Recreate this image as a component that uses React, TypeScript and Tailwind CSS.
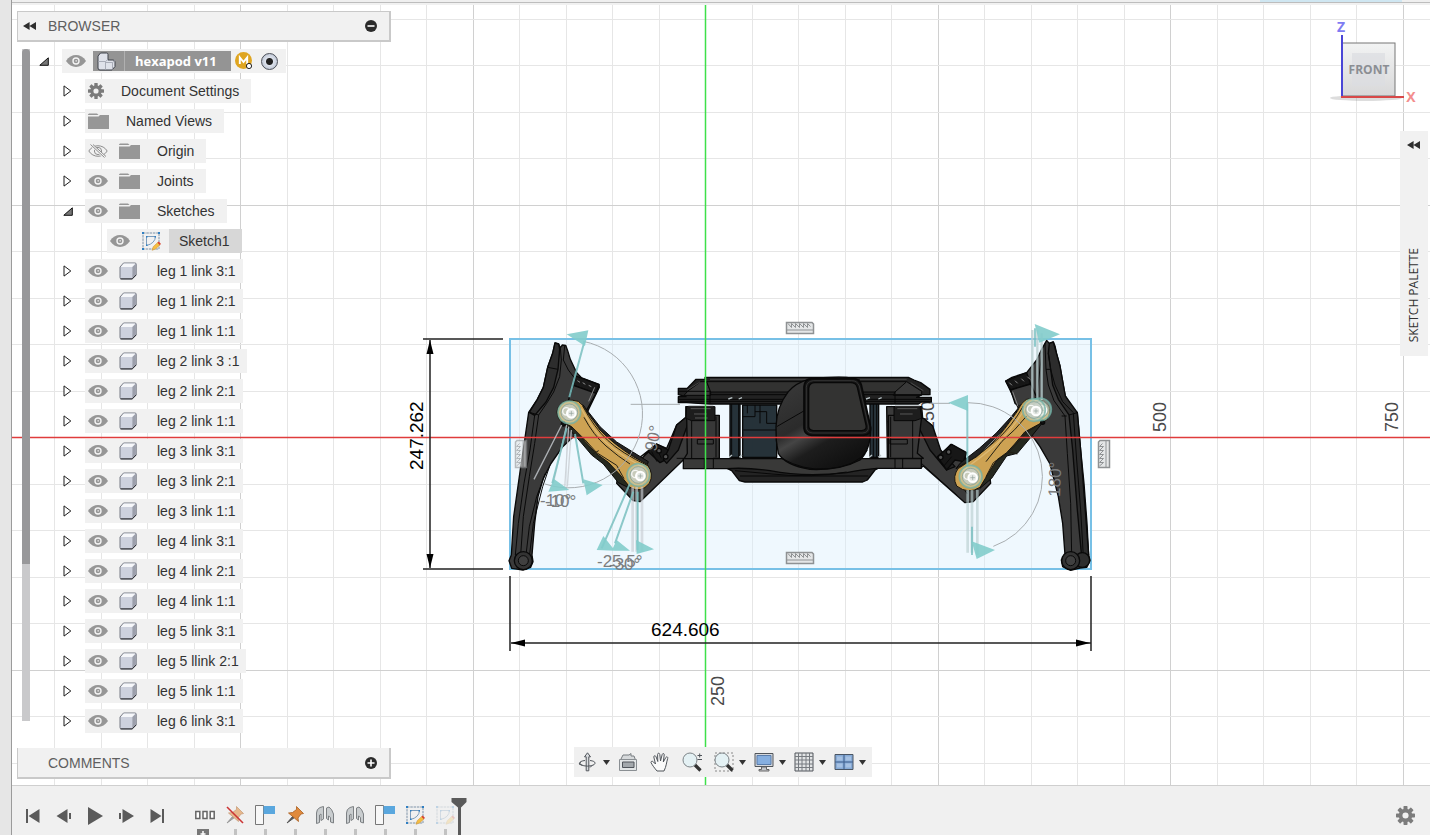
import React from "react";

const SANS = "font-['Liberation_Sans',Arial,sans-serif]";
const GRID = 46.5;
const AXIS = { x: 705, y: 437 };

/* ---------- small icons ---------- */

function Rewind() {
  return (
    <svg width="13" height="8" viewBox="0 0 13 8" fill="#2e2e2e" aria-hidden="true">
      <path d="M6.6 0v8L0 4zM13 0v8L6.4 4z" />
    </svg>
  );
}

function Eye({ off = false }: { off?: boolean }) {
  if (off) {
    return (
      <svg width="20" height="14" viewBox="0 0 20 14" fill="none" stroke="#8c8c8c" aria-hidden="true">
        <path d="M.8 7C5 0 15 0 19.2 7C15 14 5 14 .8 7z" />
        <circle cx="10" cy="7" r="3.6" />
        <path d="M3.5 1l13 12" stroke="#f1f1f1" strokeWidth="3" />
        <path d="M2.5 .5l14 13M5 .5l13 12" />
      </svg>
    );
  }
  return (
    <svg width="20" height="14" viewBox="0 0 20 14" aria-hidden="true">
      <path d="M0 7C5-.9 15-.9 20 7C15 14.900 5 14.900 0 7z" fill="#969696" />
      <circle cx="10" cy="7" r="3.7" fill="#f4f4f4" />
      <circle cx="10" cy="7" r="2.300" fill="#969696" />
      <circle cx="10.200" cy="6.800" r=".9" fill="#ddd" />
    </svg>
  );
}

function Folder() {
  return (
    <svg width="21" height="17" viewBox="0 0 21 17" fill="#979797" aria-hidden="true">
      <path d="M0 1.500L1 .5h8l1.500 1.500H0z" />
      <path d="M0 3.500h10.500l1.500-1.500h9V16H0z" />
    </svg>
  );
}

function Gear({ size, color, hole }: { size: number; color: string; hole: string }) {
  return (
    <svg width={size} height={size} viewBox="-9 -9 18 18" fill={color} aria-hidden="true">
      {[0, 45, 90, 135].map((a) => (
        <rect key={a} x="-1.900" y="-9" width="3.800" height="18" rx=".6" transform={`rotate(${a})`} />
      ))}
      <circle r="6.400" />
      <circle r="2.900" fill={hole} />
    </svg>
  );
}

function Cube() {
  return (
    <svg width="18" height="18" viewBox="0 0 18 18" aria-hidden="true">
      <path d="M1 5L4.500 1H16q1.200 0 1.200 1.200V13l-4 4H2.500Q1 17 1 15.500z" fill="#cdd1dd" stroke="#777a84" />
      <path d="M1.800 5L4.800 1.500H16.400L13.400 5z" fill="#f6f7fa" />
      <path d="M13.400 5L16.800 1.800v11L13.400 16.400z" fill="#9c9fab" />
      <path d="M1.500 16.900h11.700l3.900-3.900" fill="none" stroke="#2b2c31" />
    </svg>
  );
}

function Component() {
  return (
    <svg width="19" height="19" viewBox="0 0 19 19" fill="#dfe2ea" stroke="#3f424b" aria-hidden="true">
      <path d="M1 4L3.500 1H9.500Q11 1 11 2.500V8h5q2 0 2 2v4.500L15 18H3Q1 18 1 16z" />
      <path d="M1.500 9.500H8.500V17.500M8.500 9.500L11 7.500" fill="none" stroke="#a9adb8" />
      <path d="M8.500 10.500H15.500L18 8.500M15.500 10.500V17.500" fill="none" stroke="#a9adb8" />
    </svg>
  );
}

function SketchIcon({ faded = false }: { faded?: boolean }) {
  return (
    <svg width="20" height="20" viewBox="0 0 20 20" fill="none" opacity={faded ? 0.25 : 1} aria-hidden="true">
      <path d="M2 2h16v16H2z" stroke="#7e93a8" strokeDasharray="2.500 .8" />
      <path d="M5.500 5.500h9q-.5 7-9 9z" stroke="#7b9cbc" />
      <path d="M1 1h2v2H1zM17 1h2v2h-2zM1 17h2v2H1zM5 5h1.500v1.500H5zM13.500 5H15v1.500h-1.500zM5 13.500h1.500V15H5z" fill="#2f7fc2" />
      <path d="M11 19.300l1.200-3.600 4.400-4.100 2.300 2.300-4.400 4.100z" fill="#f5bd42" stroke="#c58c30" strokeWidth=".5" />
      <path d="M16.500 11.800l1.300-1.200 2.200 2.300-1.200 1.100z" fill="#d9402e" />
    </svg>
  );
}

function Expander({ open = false }: { open?: boolean }) {
  return open ? (
    <svg width="10" height="9" viewBox="0 0 10 9" aria-hidden="true">
      <path d="M.8 8.300H9.300V.8z" fill="#777" stroke="#111" />
    </svg>
  ) : (
    <svg width="9" height="12" viewBox="0 0 9 12" aria-hidden="true">
      <path d="M1 .9V11.100L7.800 6z" fill="#fff" stroke="#1d1d1d" />
    </svg>
  );
}

function Caret() {
  return (
    <svg width="7" height="5" viewBox="0 0 7 5" fill="#333" aria-hidden="true">
      <path d="M0 0h7L3.500 5z" />
    </svg>
  );
}

/* ---------- browser tree ---------- */

type Kind = "gear" | "folder" | "cube";
interface Node {
  label: string;
  kind: Kind;
  eye?: "on" | "off";
  open?: boolean;
}

const TOP: Node[] = [
  { label: "Document Settings", kind: "gear" },
  { label: "Named Views", kind: "folder" },
  { label: "Origin", kind: "folder", eye: "off" },
  { label: "Joints", kind: "folder", eye: "on" },
  { label: "Sketches", kind: "folder", eye: "on", open: true },
];

const LEGS = [
  "leg 1 link 3:1", "leg 1 link 2:1", "leg 1 link 1:1",
  "leg 2 link 3 :1", "leg 2 link 2:1", "leg 2 link 1:1",
  "leg 3 link 3:1", "leg 3 link 2:1", "leg 3 link 1:1",
  "leg 4 link 3:1", "leg 4 link 2:1", "leg 4 link 1:1",
  "leg 5 link 3:1", "leg 5 llink 2:1", "leg 5 link 1:1",
  "leg 6 link 3:1",
];

function TreeRow({ node }: { node: Node }) {
  const cube = node.kind === "cube";
  return (
    <li className="flex h-[30px] items-center pl-[33px]">
      <button className="flex w-[22px] shrink-0 items-center" aria-label={`Expand ${node.label}`}>
        <Expander open={node.open} />
      </button>
      <div className={`flex h-6 items-center bg-[#f1f1f1] pl-[3px] ${cube ? "pr-[7px]" : "pr-3"}`}>
        {node.eye && (
          <button className="flex w-[31px] items-center" aria-label={`Visibility of ${node.label}`}>
            <Eye off={node.eye === "off"} />
          </button>
        )}
        <span className={node.eye ? "w-[38px]" : node.kind === "gear" ? "w-[33px]" : "w-[38px]"}>
          {node.kind === "gear" && <Gear size={16} color="#7b7b7b" hole="#f1f1f1" />}
          {node.kind === "folder" && <Folder />}
          {cube && <Cube />}
        </span>
        <button className="whitespace-nowrap">{node.label}</button>
      </div>
    </li>
  );
}

function Browser() {
  return (
    <div className="flex">
      <div className="ml-[5px] mt-[7px] h-[672px] w-2 bg-[#c9c9cb]">
        <div className="h-[515px] rounded-t-sm bg-[#98989a]" />
      </div>
      <ul className="mt-1 text-[14px] leading-[18px] text-[#333]">
        <li className="flex h-[30px] items-center pl-[9px]">
          <button className="flex w-[23px] items-center" aria-label="Collapse hexapod v11">
            <Expander open />
          </button>
          <div className="flex h-6 items-center bg-[#f1f1f1] pl-1 pr-2">
            <button className="flex w-[27px] items-center" aria-label="Visibility of hexapod v11">
              <Eye />
            </button>
            <div className="flex h-5 items-center bg-[#949494]">
              <span className="flex h-5 w-8 items-center border-r border-[#b0b0b0] pl-1">
                <Component />
              </span>
              <button className="pl-2.5 pr-3.5 font-['Open_Sans',sans-serif] text-[13px] font-bold text-white">
                hexapod v11
              </button>
            </div>
            <svg className="ml-1 mr-2" width="18" height="18" viewBox="0 0 18 18" aria-hidden="true">
              <circle cx="8.500" cy="8.500" r="8.500" fill="#dfa520" />
              <path d="M4.800 12V5.500L8.500 10l3.700-4.500V12" fill="none" stroke="#fff" strokeWidth="1.900" />
              <circle cx="14" cy="14" r="2.600" fill="#fff" stroke="#222" />
            </svg>
            <label className="relative flex">
              <input
                type="radio"
                defaultChecked
                aria-label="Activate component"
                className="size-[17px] appearance-none rounded-full border border-[#4b4f58] bg-[radial-gradient(circle,#222_0_3px,#dde2ec_4px,#b8c0cf_9px)]"
              />
            </label>
          </div>
        </li>
        {TOP.map((n) => (
          <TreeRow key={n.label} node={n} />
        ))}
        <li className="flex h-[30px] items-center pl-[77px]">
          <div className="flex h-6 items-center bg-[#f1f1f1] pl-[3px]">
            <button className="flex w-[31px] items-center" aria-label="Visibility of Sketch1">
              <Eye />
            </button>
            <span className="w-7">
              <SketchIcon />
            </span>
            <button className="h-6 bg-[#d7d7d7] pl-2.5 pr-3">Sketch1</button>
          </div>
        </li>
        {LEGS.map((l) => (
          <TreeRow key={l} node={{ label: l, kind: "cube", eye: "on" }} />
        ))}
      </ul>
    </div>
  );
}

/* ---------- model ---------- */

function Rack({ x, y, turn = 0 }: { x: number; y: number; turn?: number }) {
  return (
    <g transform={`translate(${x} ${y}) rotate(${turn})`} fill="#e4e6e7" stroke="#8f9294">
      <path d="M-13.500 -5.500H12L13.500 -4V5.500H-13.500z" strokeWidth="1.500" />
      <path d="M-12 -4.500l3.500 4v-4l4 4v-4l4 4v-4l4 4v-4l4 4v-4l3 3M-13 2h26" fill="none" />
    </g>
  );
}

function Joint({ x, y }: { x: number; y: number }) {
  return (
    <g transform={`translate(${x} ${y})`}>
      <circle r="34" fill="#c9dccb" fillOpacity=".5" stroke="#6fb0a6" strokeWidth="5" strokeOpacity=".75" />
      <circle r="25" fill="#c5cdc4" fillOpacity=".8" stroke="#7a9a92" strokeWidth="2" />
      <circle cx="-9" cy="-3" r="11" fill="none" stroke="#f4f6f4" strokeWidth="4" />
      <circle cx="6" cy="3" r="13" fill="#e6e9e5" stroke="#fff" strokeWidth="6" />
      <path d="M6 -4V10M-1 3H13" stroke="#8f9f98" strokeWidth="2" />
    </g>
  );
}

function LeftLeg() {
  return (
    <g transform="translate(400 310) scale(.33333)" stroke="#090909" strokeWidth="4" strokeLinejoin="round">
      <path fill="#3a3a3a" d="M465 99L476 102L481 113L487 105L497 106L503 122L511 148L530 188L545 204L597 223L598 232L566 298L540 360L520 380L488 410L452 462L430 505L414 560L404 640L396 735L399 755L392 772L370 780L335 775L327 752L334 735L341 620L358 500L374 390L386 307L412 268L430 232L443 172L458 130z" />
      <path fill="#2d2d2d" d="M465 99L476 102L479 118L474 178L461 232L438 276L404 316L388 307L412 268L430 232L443 172L458 130z" />
      <path fill="none" strokeWidth="3" d="M481 113L484 150L479 200L461 246L440 280L416 315L404 400L388 500L370 620L362 735M404 316L390 420L372 520L355 640L346 735M494 108L490 150L505 180L528 210M443 172L474 178M388 307L416 315M436 490L410 560L388 650L378 735M450 465L428 530L400 640L388 740M345 735L392 745" />
      <path fill="#191919" d="M527 198L597 224L588 250L520 226z" />
      <path fill="#3c3c3c" d="M520 226L588 250L560 300L505 272z" />
      <path stroke="#8a8a8a" strokeWidth="3" fill="none" d="M532 212l8 5M548 218l8 5M566 226l8 4M584 232l-18 42" />
      <circle cx="370" cy="752" r="27" fill="#333" />
      <circle cx="370" cy="752" r="15" fill="#404040" strokeWidth="3" />
      {/* lower bracket and servo */}
      <path fill="#3b3b3b" d="M720 575L700 572L650 520L652 506L640 480L720 450L770 402L800 415L830 345L858 322L858 290L905 290L905 472L852 472L852 448z" />
      <path fill="#191919" d="M722 440L770 402L805 420L800 448L780 458L745 425z" />
      <path fill="#262626" d="M858 290L905 290L905 325L868 330L835 420L800 460L790 448L805 420L830 345L858 322z" />
      <path fill="none" strokeWidth="3" d="M876 325V472M770 415l14 30M755 425l16 30M830 445H870" />
      <circle cx="777" cy="422" r="7" fill="#555" />
      <circle cx="797" cy="440" r="7" fill="#555" />
      {/* coloured link */}
      <path fill="#242424" strokeWidth="3" d="M548 284L600 350L650 396L705 430L745 455L740 470L680 430L600 362z" />
      <path fill="#25281f" strokeWidth="3" d="M490 340L530 382L575 435L610 462L655 518L690 535L670 500L620 440L540 362z" />
      <path fill="#cda253" stroke="#17150f" strokeWidth="3" d="M480 284Q500 264 535 274Q548 282 562 308L600 360Q640 402 700 440L742 464Q763 492 748 520Q722 552 690 532L658 492L625 457L588 430L556 395L515 350L480 332Q462 305 480 284z" />
      <path fill="none" stroke="#201d13" strokeWidth="3" d="M548 288Q582 352 622 390T745 468M552 322Q580 375 618 408T690 462M520 355Q556 388 590 428L650 466L672 506M575 434L596 422" />
      <path fill="none" stroke="#dcb873" strokeWidth="4" d="M544 296Q577 358 614 394T730 472" />
      <circle cx="490" cy="342" r="6" fill="#111" />
    </g>
  );
}

function RightLeg() {
  return (
    <g transform="translate(880 310) scale(.33333)" stroke="#090909" strokeWidth="4" strokeLinejoin="round">
      <path fill="#3a3a3a" d="M500 91L508 100L520 96L525 108L530 132L540 168L550 225L556 258L580 300L592 308L602 420L612 520L621 640L626 735L630 752L620 772L600 774L572 781L548 770L544 750L555 735L548 640L535 560L510 462L480 410L452 370L440 330L415 295L400 260L377 213L396 202L440 188L470 150L485 118z" />
      <path fill="#2c2c2c" d="M508 100L520 96L530 132L540 168L550 225L556 258L592 308L602 420L626 735L605 740L592 600L578 420L567 315L535 268L518 225L512 178L505 130z" />
      <path fill="none" strokeWidth="3" d="M495 100L498 178L505 225L522 272L555 318L562 430L572 580L575 735M512 178L525 225L548 275L580 308M580 310L590 450L602 600L610 740M505 130L512 178M498 178L512 178M545 318L560 318M555 735L592 735M486 125L470 260M567 315L592 308" />
      <path fill="#171717" d="M377 213L440 188L452 222L392 240z" />
      <path fill="#3b3b3b" d="M392 240L452 222L470 262L420 290L405 280z" />
      <path stroke="#8a8a8a" strokeWidth="3" fill="none" d="M388 218l8 8M405 212l8 8M424 206l8 8M442 200l8 8M398 245l16 44" />
      <circle cx="607" cy="750" r="22" fill="#2e2e2e" />
      <circle cx="572" cy="752" r="27" fill="#333" />
      <circle cx="572" cy="752" r="15" fill="#404040" strokeWidth="3" />
      <path fill="#3b3b3b" d="M20 290L125 290L128 325L155 345L178 440L212 403L250 425L262 460L330 505L332 520L280 575L255 578L130 468L125 472L0 472L0 445L22 445z" />
      <path fill="#262626" d="M103 325L130 325L158 348L182 420L225 470L200 480L150 420z" />
      <path fill="#171717" d="M172 440L215 403L260 428L250 455L225 450L200 480z" />
      <path fill="none" strokeWidth="3" d="M102 335V440L230 555M190 470L215 440M22 335H102M240 520L262 552" />
      <circle cx="182" cy="442" r="7" fill="#555" />
      <circle cx="206" cy="426" r="7" fill="#555" />
      <path fill="#242424" strokeWidth="3" d="M425 282L392 322L348 370L298 415L240 460L228 476L290 440L375 355z" />
      <path fill="#25281f" strokeWidth="3" d="M490 335L450 385L412 430L380 438L335 505L300 535L320 490L360 440L430 368z" />
      <path fill="#cda253" stroke="#17150f" strokeWidth="3" d="M505 285Q480 258 440 268Q425 276 412 304L375 355Q345 395 290 440L237 472Q215 500 230 528Q265 555 300 532L325 490L350 450L380 428L404 402L434 366L500 330Q516 305 505 285z" />
      <path fill="none" stroke="#201d13" strokeWidth="3" d="M430 288Q395 350 350 390T236 475M440 318Q405 362 366 394L318 455M486 338L440 368L385 428L340 458L318 500M385 425L412 432" />
      <path fill="none" stroke="#dcb873" strokeWidth="4" d="M436 294Q400 354 356 396T240 486" />
      <circle cx="488" cy="337" r="6" fill="#111" />
    </g>
  );
}

function Body() {
  return (
    <g transform="translate(660 350) scale(.33333)" stroke="#080808" strokeWidth="4" strokeLinejoin="round">
      <path fill="#1d2a31" fillOpacity=".96" d="M248 165H350V322H248zM210 160H240V322H210zM630 160H656V322H630z" />
      <path fill="none" strokeWidth="3" d="M248 200H285V165M285 185H320V220H350M250 240H350M262 165V190M300 165V220M215 160V322M236 160V322M640 160V322M650 160V322" />
      <path fill="#222" d="M55 115L82 115L108 88H135V82H745L762 90L782 98L810 118V134H785L770 142H814V156H785L775 162H150L80 158H55V140H78L55 134z" />
      <path fill="#393939" strokeWidth="3" d="M85 122L122 95H140L152 126V136H72z" />
      <path fill="#323231" strokeWidth="3" d="M140 95H740L710 126H152z" />
      <path fill="#393939" strokeWidth="3" d="M705 126L740 95L785 124V136H700z" />
      <path fill="none" stroke="#5c5c5c" strokeWidth="2" d="M82 120L120 96M752 98L790 122M150 88H440M600 88H740" />
      <path fill="none" strokeWidth="3" d="M55 124H150M55 148H812M150 126V160M705 126V160M60 154H808M152 134H808" />
      <path stroke="#b9c4c7" strokeWidth="4" fill="none" d="M205 147l12-4M236 147l10-4M618 147l12-4M655 147l10-4M208 322l8-7M238 322l8-7M628 322l8-7M655 322l8-7" />
      {/* servo towers */}
      <path fill="#383838" d="M80 200L85 170H160L162 196H178V325H160V330H70L82 310z" />
      <path fill="#1d1d1d" strokeWidth="3" d="M80 170H165V212H95L78 205z" />
      <path fill="#383838" d="M785 200L780 170H705V196H685V325H790L772 310z" />
      <path fill="#1d1d1d" strokeWidth="3" d="M780 170H702V212H765L785 205z" />
      <path fill="none" strokeWidth="3" d="M95 212V325M168 200V322M112 268H160V282H112zM692 200V322M758 212V325M690 268H742V282H690z" />
      <path fill="none" stroke="#777" strokeWidth="2" d="M85 168h75M92 176h60M102 192h38M705 168h75M712 176h60M720 192h38M105 204h38" />
      {/* underside plate */}
      <path fill="#242424" d="M195 352L215 362L238 392L255 396H608L622 390L645 360L660 352z" />
      <path fill="#393938" d="M70 326H784V355H650Q610 358 560 368Q430 382 330 362Q260 352 200 356H70z" />
      <path fill="none" strokeWidth="3" d="M133 326V355M160 326V355M705 326V355M728 326V355M225 362L335 372M240 378H625M335 372Q460 385 560 366" />
      {/* head */}
      <path fill="url(#head)" d="M348 230Q350 170 385 125Q405 100 445 88Q500 80 560 82Q590 85 598 95L632 235Q632 300 600 330Q540 362 450 358Q375 345 355 310Q346 270 348 230z" />
      <path fill="none" strokeWidth="3" d="M350 230L440 178M365 325Q430 362 500 357Q590 350 622 300" />
      <path fill="#151515" strokeWidth="5" d="M455 86H580Q598 86 604 105L632 232Q634 254 610 256H455Q434 254 432 235V110Q434 88 455 86z" />
      <path fill="#333332" strokeWidth="4" d="M465 98H572Q588 98 592 112L618 225Q622 240 605 242H460Q446 240 446 228V115Q448 98 465 98z" />
      <path fill="none" stroke="#444" strokeWidth="2" d="M460 92H575Q592 92 598 108L625 228Q628 248 608 249H458Q440 248 439 232V112Q440 94 460 92z" />
    </g>
  );
}

function LeftGuides() {
  return (
    <g transform="translate(400 310) scale(.33333)">
      <path d="M550 94A222 222 0 1 1 435 522M692 283H840" fill="none" stroke="#a8adb0" strokeWidth="3" />
      <g stroke="#c8cdd2" strokeWidth="4" strokeOpacity=".8">
        <path d="M485 345L402 508M500 345L460 520M506 350L494 535M514 360L502 530" />
        <path d="M698 530V725M726 530V725M710 530V725" strokeWidth="8" strokeOpacity=".65" />
      </g>
      <path d="M553 95L508 262M500 355L457 520M525 372L550 520M690 520L605 715M700 545L645 700M713 545V720" stroke="#79bfc0" strokeOpacity=".85" strokeWidth="6" fill="none" />
      <path d="M500 73L565 61L555 108zM445 545L462 507L508 540zM550 508L608 525L560 556zM590 720L610 678L645 722zM635 722L650 690L690 722zM708 690L762 718L710 732z" fill="#82cccb" fillOpacity=".9" />
      <Joint x={508} y={307} />
      <Joint x={715} y={495} />
    </g>
  );
}

function RightGuides() {
  return (
    <g transform="translate(880 310) scale(.33333)">
      <path d="M262 278A222 222 0 0 1 340 709M150 280H210" fill="none" stroke="#a8adb0" strokeWidth="3" />
      <g stroke="#b9ced0" strokeWidth="7" strokeOpacity=".8">
        <path d="M457 60V270M472 60V270M485 70V270" />
        <path d="M263 540V728M276 540V728M292 540V735" strokeWidth="8" strokeOpacity=".65" />
      </g>
      <path d="M262 280V470M465 55V110M276 650V735" stroke="#79bfc0" strokeOpacity=".8" strokeWidth="6" />
      <path d="M205 278L264 255V303zM464 42L540 73L478 98zM275 694L345 720L290 747z" fill="#82cccb" fillOpacity=".9" />
      <Joint x={480} y={298} />
      <Joint x={462} y={300} />
      <Joint x={272} y={500} />
    </g>
  );
}

const steps = (from: number, to: number) => Array.from({ length: to - from + 1 }, (_, i) => from + i);

function Viewport() {
  return (
    <svg className={`absolute inset-0 h-full w-full ${SANS}`} role="img" aria-label="hexapod model, front view">
      <defs>
        <linearGradient id="head" x1="0" y1="0" x2=".6" y2="1">
          <stop offset="0" stopColor="#3c3c3c" />
          <stop offset=".5" stopColor="#2b2b2b" />
          <stop offset=".6" stopColor="#454545" />
          <stop offset=".75" stopColor="#1d1d1d" />
          <stop offset="1" stopColor="#111" />
        </linearGradient>
      </defs>
      <g transform="translate(-12 -5)">
        <g shapeRendering="crispEdges">
          {steps(-15, 60).map((k) => (
            <rect key={`v${k}`} x={Math.round(AXIS.x + k * GRID)} y="-20" width="1" height="3000" fill={k % 5 ? "#e6e6e6" : "#d0d0d0"} />
          ))}
          {steps(-10, 50).map((k) => (
            <rect key={`h${k}`} x="0" y={Math.round(AXIS.y + k * GRID)} width="4000" height="1" fill={k % 5 ? "#e6e6e6" : "#d0d0d0"} />
          ))}
        </g>
        <rect x="510" y="339" width="581" height="230" fill="#d9effc" fillOpacity=".42" />
        <g fill="#4a4a4a" fontSize="18">
          <text transform="translate(934 431) rotate(-90)">250</text>
          <text transform="translate(724 706) rotate(-90)">250</text>
          <text transform="translate(1166 432) rotate(-90)">500</text>
          <text transform="translate(1398 432) rotate(-90)">750</text>
        </g>
        <rect x="510" y="339" width="581" height="230" fill="none" stroke="#77c0e6" strokeWidth="2" />
        <LeftLeg />
        <RightLeg />
        <Body />
        <g fill="#3ee04a">
          <rect x="704" y="0" width="3" height="3000" opacity=".25" />
          <rect x="705" y="0" width="1" height="3000" />
        </g>
        <g fill="#e03c3c">
          <rect x="0" y="436" width="4000" height="3" opacity=".25" />
          <rect x="0" y="437" width="4000" height="1" />
        </g>
        <LeftGuides />
        <RightGuides />
        <Rack x={800} y={328} />
        <Rack x={800} y={558} />
        <Rack x={1104} y={454} turn={-90} />
        <g opacity=".6">
          <Rack x={521} y={454} turn={-90} />
        </g>
        <g fill="#7b7d7f" fontSize="17">
          <text x="540" y="506">-10°</text>
          <text x="545" y="507">-10°</text>
          <text x="597" y="567">-25.5°</text>
          <text x="609" y="570">-30°</text>
          <text transform="translate(656 452) rotate(-78)">90°</text>
          <text transform="translate(1060 497) rotate(-88)">180°</text>
        </g>
        {/* dimensions */}
        <g stroke="#222" strokeWidth="1.500">
          <path d="M423 339h80M423 569h80M430 340v228M510 576v75M1091 576v75M511 643h580" />
        </g>
        <path d="M430 340l-3.500 14h7zM430 568l-3.500-14h7zM511 643l14-3.500v7zM1090 643l-14-3.500v7z" fill="#000" />
        <g fill="#000" fontSize="19">
          <text x="651" y="636">624.606</text>
          <text transform="translate(423 470) rotate(-90)">247.262</text>
        </g>
      </g>
    </svg>
  );
}

function ViewCube() {
  return (
    <svg width="92" height="90" viewBox="1328 17 92 90" className="font-['Open_Sans',sans-serif]" role="img" aria-label="View cube">
      <defs>
        <linearGradient id="face" x1="0" y1="0" x2="0" y2="1">
          <stop offset="0" stopColor="#f2f3f3" />
          <stop offset="1" stopColor="#d8d8d9" />
        </linearGradient>
      </defs>
      <ellipse cx="1366" cy="98" rx="36" ry="3" fill="#777" opacity=".25" />
      <rect x="1342" y="43" width="53" height="53" fill="url(#face)" stroke="#777" />
      <rect x="1352" y="53" width="33" height="33" fill="#dcdde1" opacity=".7" />
      <text x="1369" y="74" textAnchor="middle" fontSize="12" fontWeight="700" fill="#8b8e93">FRONT</text>
      <path d="M1342 35v62" stroke="#4a46d6" strokeWidth="2" />
      <path d="M1341 97h63" stroke="#d84848" strokeWidth="2" />
      <text x="1341" y="32" textAnchor="middle" fontSize="14" fontWeight="700" fill="#7f7cf2">Z</text>
      <text x="1411" y="102" textAnchor="middle" fontSize="14" fontWeight="700" fill="#f38e8e">X</text>
    </svg>
  );
}

/* ---------- navigation bar ---------- */

function NavButton({ label, caret, children }: { label: string; caret?: boolean; children: React.ReactNode }) {
  return (
    <button aria-label={label} className="flex items-center gap-[5px]">
      <svg width="20" height="20" viewBox="0 0 20 20" fill="none" stroke="#50555b" aria-hidden="true">
        {children}
      </svg>
      {caret && <Caret />}
    </button>
  );
}

function Lens() {
  return (
    <>
      <path d="M12.500 12.500l6 6" stroke="#333" strokeWidth="3.200" />
      <circle cx="8" cy="8" r="7" fill="#e4f1f4" stroke="#7d8488" />
    </>
  );
}

function NavBar() {
  return (
    <nav className="flex h-[30px] items-center bg-[#f0f0f0] pl-1 pr-1.5">
      <div className="mr-2">
        <NavButton label="Orbit" caret>
          <path d="M9.500 .8l3 4h-1.700v14H8.200v-14H6.500z" fill="#d9dcdf" />
          <path d="M7 8.500C2 9 .5 11 3 12.700c3 1.900 10 1.900 13 0 2.200-1.700 1-3.600-4-4.200M3 9.500l-2 2.500 3.500 1.500M14 13.500l-2 2" />
        </NavButton>
      </div>
      <div className="mr-3 flex gap-3">
        <NavButton label="Look at">
          <path d="M2.500 8l2.500-5h6l2-1.500v2.500h3l1.500 4" fill="#d6d9db" stroke="#777c80" />
          <path d="M1.500 7.500h17v11h-17z" fill="#e3e6e7" stroke="#8a8f93" />
          <path d="M4.500 10h11.500v5.500H4.500z" fill="#a3a8ac" />
        </NavButton>
        <NavButton label="Pan">
          <path d="M7 19C4.500 16 2.500 13.500 1 10.500c0-1.500 1.500-1.600 2.500-.5L5.500 12 3.800 5c0-1.600 1.700-1.700 2.200-.3L7.800 9.500 7.600 2.500c0-1.700 2-1.700 2.200 0L10.500 9l1.700-6.500c.5-1.500 2.200-1.200 2 .4L13.300 10l2.500-4.500c.9-1.300 2.400-.5 1.900.9C16.500 10 16.500 14 14 19z" fill="#fafafa" />
        </NavButton>
        <NavButton label="Zoom">
          <Lens />
          <path d="M15.500 3.500h4.500M17.700 1.500v4M15.500 7.500h4.500" />
        </NavButton>
      </div>
      <div className="flex gap-2">
        <NavButton label="Fit" caret>
          <path d="M1 1h18v18H1z" stroke="#888" strokeDasharray="2 2" />
          <Lens />
        </NavButton>
        <NavButton label="Display settings" caret>
          <path d="M1 1.500h18v13H1z" fill="#d5d8dc" />
          <path d="M3 3.500h14v9H3z" fill="#86afe0" stroke="#5a7dab" />
          <path d="M7.500 15h5v2.500h2.500v1.500h-10v-1.500h2.500z" fill="#c3c6ca" stroke="#666" />
        </NavButton>
        <NavButton label="Grid and snaps" caret>
          <path d="M1 1h18v18H1z" fill="#e2e4e5" />
          <path d="M4.500 1v18M8 1v18M12 1v18M15.500 1v18M1 4.500h18M1 8h18M1 12h18M1 15.500h18" stroke="#777b80" />
        </NavButton>
        <NavButton label="Viewports" caret>
          <path d="M1 2.500h18v15H1z" fill="#86aad6" stroke="#4a5563" />
          <path d="M3 4.500h5.500v4H3zM11.500 4.500h5.500v4h-5.500zM3 11.500h5.500v4H3zM11.500 11.500h5.500v4h-5.500z" fill="#a6c1e3" stroke="none" />
          <path d="M10 2.500v15M1 10h18" stroke="#3f5f8c" />
        </NavButton>
      </div>
    </nav>
  );
}

/* ---------- timeline ---------- */

const PLAY: { label: string; d: string }[] = [
  { label: "Go to start", d: "M2 2h2v14H2zM15.500 2v14L4.500 9z" },
  { label: "Step back", d: "M12.500 2v14L1.500 9zM14 6H16v6H14z" },
  { label: "Play", d: "M2 0v18L17 9z" },
  { label: "Step forward", d: "M5.500 2v14l11.500-7zM2 6h2v6H2z" },
  { label: "Go to end", d: "M2.500 2v14l11-7zM14 2h2v14h-2z" },
];

function Pin({ off = false }: { off?: boolean }) {
  return (
    <svg width="20" height="20" viewBox="0 0 20 20" aria-hidden="true">
      <g opacity={off ? 0.55 : 1}>
        <path d="M2 18l6-7 1.500 1.500z" fill="#555" stroke="#555" />
        <path d="M11.500 1.500L18.500 8.500 16 9l-3 4 .5 3.500L3.500 8l4-.5 4-3z" fill="#e08a3c" stroke="#a95e20" strokeWidth=".8" />
      </g>
      {off && <path d="M2 2l16 16" stroke="#cc3434" strokeWidth="1.600" />}
    </svg>
  );
}

function Flag() {
  return (
    <svg width="20" height="20" viewBox="0 0 20 20" aria-hidden="true">
      <path d="M.5 .5h8v19h-8z" fill="#f7f7f7" stroke="#777" />
      <path d="M8.500 1H20v8H8.500z" fill="#5aa7de" />
    </svg>
  );
}

function JointMark() {
  return (
    <svg width="20" height="20" viewBox="0 0 20 20" fill="#c9cdcf" stroke="#7d8184" aria-hidden="true">
      <path d="M1.500 8Q1.500 4 5 2.500L8.500 1.500V14L6 15.500V9L4.500 10V17.500L1.500 18.500z" />
      <path d="M11.500 3L14 2Q17 4 18.500 9V18L15.500 17V12.500L13.500 11V15L11.500 13.500z" />
    </svg>
  );
}

function Group() {
  return (
    <svg width="20" height="20" viewBox="0 0 20 20" fill="#fff" stroke="#666" aria-hidden="true">
      <path d="M.8 6.500h4v7h-4zM8 6.500h4v7H8zM15.200 6.500h4v7h-4z" strokeWidth="1.500" />
    </svg>
  );
}

const FEATURES: { label: string; icon: React.ReactNode }[] = [
  { label: "Group", icon: <Group /> },
  { label: "Unpin", icon: <Pin off /> },
  { label: "Plane 1", icon: <Flag /> },
  { label: "Pin", icon: <Pin /> },
  { label: "Joint 1", icon: <JointMark /> },
  { label: "Joint 2", icon: <JointMark /> },
  { label: "Plane 2", icon: <Flag /> },
  { label: "Sketch 1", icon: <SketchIcon /> },
  { label: "Sketch 2", icon: <SketchIcon faded /> },
];

function Timeline() {
  return (
    <footer className="flex h-[50px] shrink-0 border-t border-[#cfcfcf] bg-[#f0f0f0]">
      <div className="ml-3 mt-[21px] flex h-[18px] gap-[13px]">
        {PLAY.map((p) => (
          <button key={p.label} aria-label={p.label}>
            <svg width="18" height="18" viewBox="0 0 18 18" fill="#5a5a5a" aria-hidden="true">
              <path d={p.d} />
            </svg>
          </button>
        ))}
      </div>
      <ol className="ml-[29px] mt-[19px] flex gap-2.5">
        {FEATURES.map((f, i) => (
          <li key={f.label} className="flex w-5 flex-col items-center gap-1">
            <button aria-label={f.label}>{f.icon}</button>
            {i === 0 ? (
              <svg className="mr-1" width="12" height="6" viewBox="0 0 12 6" aria-hidden="true">
                <path d="M0 0h12v6H0z" fill="#777" />
                <path d="M6 2v4M3.500 5h5" stroke="#fff" strokeWidth="1.500" />
              </svg>
            ) : (
              <span className="h-1.5 w-[3px] bg-[#c2c2c2]" />
            )}
          </li>
        ))}
      </ol>
      <svg className="-ml-1 mt-3" width="16" height="37" viewBox="0 0 16 37" fill="#5a5a5a" aria-hidden="true">
        <path d="M.5 0h15v4L10 9.500V37H7V9.500L.5 4z" />
      </svg>
      <button className="ml-auto mr-[15px] mt-5 h-[19px]" aria-label="Timeline settings">
        <Gear size={19} color="#7c7c7c" hole="#f0f0f0" />
      </button>
    </footer>
  );
}

/* ---------- page ---------- */

const PANEL = "flex h-[31px] w-[374px] items-center border-b-2 border-l border-r-2 border-[#c9c9c9] bg-[#f1f1f1] pr-3";

export default function App() {
  return (
    <div className={`flex min-h-screen bg-white ${SANS}`}>
      <div className="w-3 shrink-0 border-r border-[#9b9b9b] bg-[#e6e6e6]" />
      <div className="flex min-w-0 flex-1 flex-col">
        <div className="flex h-[3px] shrink-0 justify-end border-b border-[#bdbdbd] bg-[#efefef] pr-7">
          <div className="w-[142px] bg-[#cfe6f1]" />
        </div>
        <div className="h-0.5 shrink-0 bg-[#f1f1f1]" />
        <main className="relative flex flex-1 overflow-hidden">
          <Viewport />
          <div className="relative flex flex-col justify-between pb-1.5 pl-[5px] pt-1.5">
            <section>
              <header className={`${PANEL} border-t`}>
                <button className="flex w-[30px] items-center pl-[5px]" aria-label="Collapse browser">
                  <Rewind />
                </button>
                <h2 className="flex-1 text-[14px] leading-5 text-[#5f5f5f]">BROWSER</h2>
                <button aria-label="Hide browser">
                  <svg width="12" height="12" viewBox="0 0 12 12" aria-hidden="true">
                    <circle cx="6" cy="6" r="6" fill="#2b2b2b" />
                    <path d="M2.500 6h7" stroke="#fff" strokeWidth="1.600" />
                  </svg>
                </button>
              </header>
              <Browser />
            </section>
            <header className={PANEL}>
              <h2 className="flex-1 pl-[30px] text-[14px] leading-5 text-[#5f5f5f]">COMMENTS</h2>
              <button aria-label="Show comments">
                <svg width="12" height="12" viewBox="0 0 12 12" aria-hidden="true">
                  <circle cx="6" cy="6" r="6" fill="#2b2b2b" />
                  <path d="M2.500 6h7M6 2.500v7" stroke="#fff" strokeWidth="1.600" />
                </svg>
              </button>
            </header>
          </div>
          <div className="relative ml-auto flex flex-col items-end pr-0.5 pt-3">
            <div className="mr-2">
              <ViewCube />
            </div>
            <aside className="mt-6 flex h-[225px] w-7 flex-col items-center justify-between bg-[#f1f1f1] pb-3.5 pr-0.5 pt-2.5">
              <button aria-label="Expand sketch palette">
                <Rewind />
              </button>
              <h2 className="ml-0.5 rotate-180 whitespace-nowrap font-['Open_Sans',sans-serif] text-[12px] leading-4 text-[#333] [writing-mode:vertical-rl]">
                SKETCH PALETTE
              </h2>
            </aside>
          </div>
          <div className="absolute inset-x-0 bottom-2 flex justify-center pl-1">
            <NavBar />
          </div>
        </main>
        <Timeline />
      </div>
    </div>
  );
}
